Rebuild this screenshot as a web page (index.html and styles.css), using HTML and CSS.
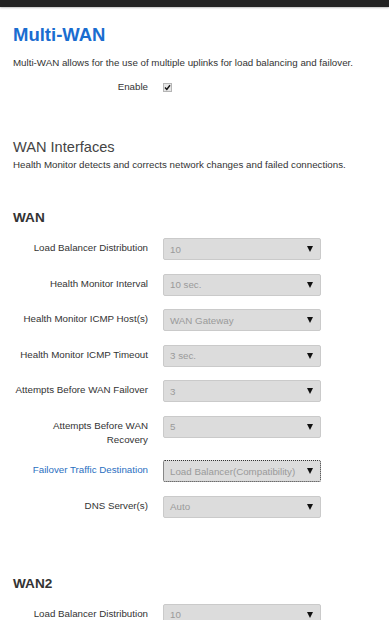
FILE: index.html
```html
<!DOCTYPE html>
<html>
<head>
<meta charset="utf-8">
<link rel="stylesheet" href="styles.css">
</head>
<body>
<div class="topbar"></div>
<main class="page">
  <h1 class="title">Multi-WAN</h1>
  <p class="desc">Multi-WAN allows for the use of multiple uplinks for load balancing and failover.</p>
  <div class="enable-row">
    <span class="label">Enable</span>
    <span class="check"><svg width="9" height="9" viewBox="0 0 9 9"><rect x="0.5" y="0.5" width="8" height="8" fill="#e6e6e6" stroke="#b5b5b5"/><path d="M2 4.6 L3.8 6.4 L7 2.3" fill="none" stroke="#111" stroke-width="1.4"/></svg></span>
  </div>

  <h2 class="section-title">WAN Interfaces</h2>
  <p class="desc desc-tight">Health Monitor detects and corrects network changes and failed connections.</p>

  <section class="iface">
    <h3 class="iface-title">WAN</h3>
    <div class="row"><span class="label">Load Balancer Distribution</span><div class="select"><span>10</span><i class="arrow"></i></div></div>
    <div class="row"><span class="label">Health Monitor Interval</span><div class="select"><span>10 sec.</span><i class="arrow"></i></div></div>
    <div class="row"><span class="label">Health Monitor ICMP Host(s)</span><div class="select"><span>WAN Gateway</span><i class="arrow"></i></div></div>
    <div class="row"><span class="label">Health Monitor ICMP Timeout</span><div class="select"><span>3 sec.</span><i class="arrow"></i></div></div>
    <div class="row"><span class="label">Attempts Before WAN Failover</span><div class="select"><span>3</span><i class="arrow"></i></div></div>
    <div class="row"><span class="label">Attempts Before WAN Recovery</span><div class="select"><span>5</span><i class="arrow"></i></div></div>
    <div class="row"><span class="label label-active">Failover Traffic Destination</span><div class="select select-focus"><span>Load Balancer(Compatibility)</span><i class="arrow"></i></div></div>
    <div class="row"><span class="label">DNS Server(s)</span><div class="select"><span>Auto</span><i class="arrow"></i></div></div>
  </section>

  <section class="iface iface-next">
    <h3 class="iface-title">WAN2</h3>
    <div class="row"><span class="label">Load Balancer Distribution</span><div class="select"><span>10</span><i class="arrow"></i></div></div>
  </section>
</main>
</body>
</html>
```

FILE: styles.css
```css
* { box-sizing: border-box; }
html, body { margin: 0; padding: 0; background: #fff; }
body {
  font-family: "Liberation Sans", Arial, sans-serif;
  font-size: 9.75px;
  color: #333;
  overflow: hidden;
}
.topbar {
  height: 7px;
  background: #222;
  box-shadow: 0 1px 2px rgba(0,0,0,0.25);
}
.page {
  padding: 0 0 0 13px;
}
.title {
  margin: 17px 0 0;
  font-size: 18.5px;
  line-height: 22px;
  font-weight: bold;
  color: #1a6dd0;
}
.desc {
  margin: 10px 0 0;
  font-size: 9.75px;
  line-height: 14px;
  color: #333;
}
.desc-tight { margin-top: 2px; }
.enable-row {
  display: flex;
  align-items: center;
  margin-top: 10px;
  height: 14px;
}
.label {
  width: 135px;
  flex: none;
  text-align: right;
  margin-right: 15px;
  color: #333;
  line-height: 14px;
}
.check { display: flex; }
.check svg { display: block; }
.section-title {
  margin: 44px 0 0;
  font-size: 14.6px;
  line-height: 18px;
  font-weight: normal;
  color: #444;
}
.iface-title {
  margin: 38px 0 12px;
  font-size: 13.6px;
  line-height: 16px;
  font-weight: bold;
  color: #333;
}
.iface-next .iface-title { margin-top: 58px; }
.row {
  display: flex;
  align-items: flex-start;
  margin-bottom: 13.5px;
}
.row .label { padding-top: 3px; }
.select {
  width: 158px;
  height: 22px;
  flex: none;
  display: flex;
  align-items: center;
  justify-content: space-between;
  padding: 0 7px 0 6px;
  background: #dcdcdc;
  border: 1px solid #cacaca;
  border-radius: 2px;
  color: #9a9a9a;
  font-size: 9.75px;
}
.select-focus { border: 1px dotted #333; }
.label-active { color: #2a6fbf; }
.arrow {
  width: 0;
  height: 0;
  border-left: 3px solid transparent;
  border-right: 3px solid transparent;
  border-top: 6px solid #111;
}
```
